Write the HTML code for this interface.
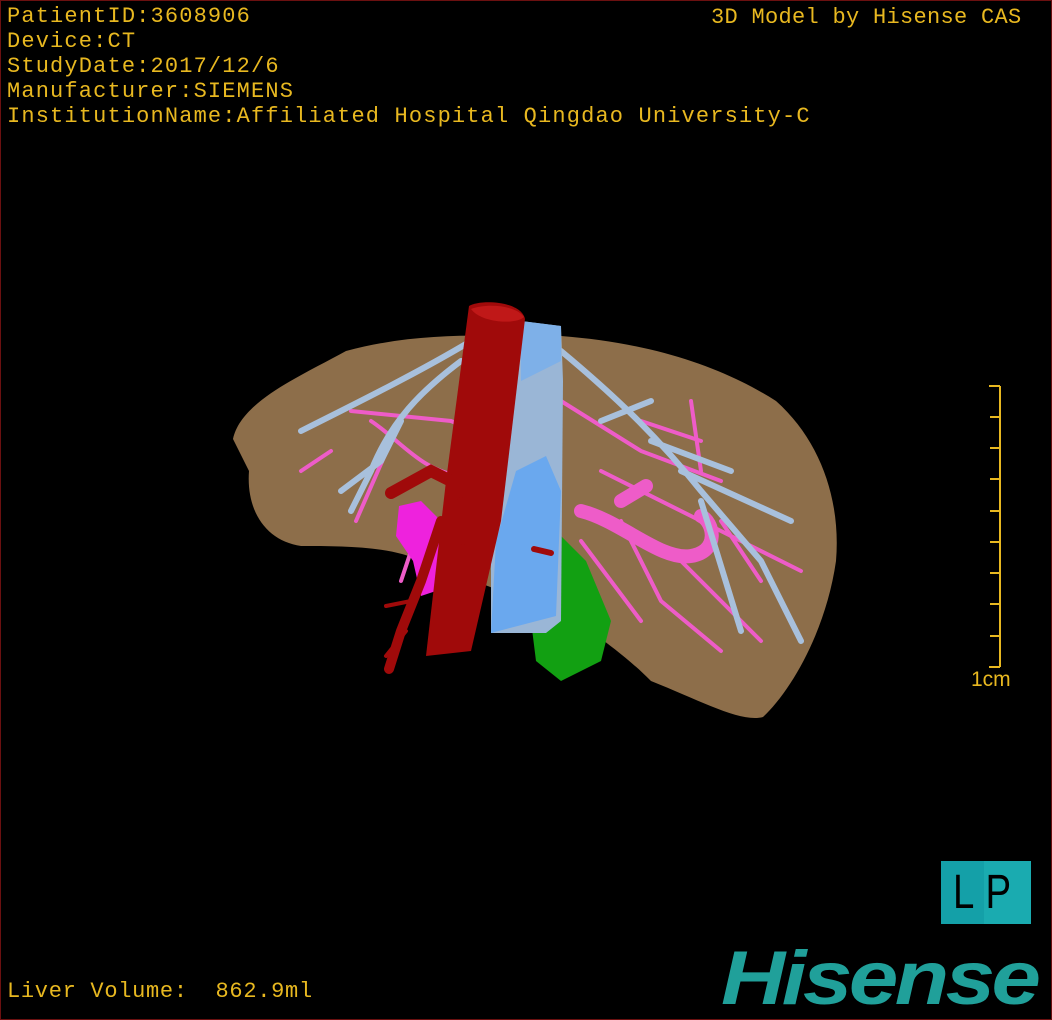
<!DOCTYPE html>
<html><head><meta charset="utf-8"><style>
html,body{margin:0;padding:0;background:#000}
#s{position:relative;width:1050px;height:1018px;border:1px solid #6b1010;background:#000;overflow:hidden}
.t{position:absolute;left:6px;color:#e8b820;font-family:"Liberation Mono",monospace;font-size:22px;line-height:25px;letter-spacing:1.15px;white-space:pre}
</style></head><body><div id="s">
<div class="t" style="top:3px">PatientID:3608906
Device:CT
StudyDate:2017/12/6
Manufacturer:SIEMENS
InstitutionName:Affiliated Hospital Qingdao University-C</div>
<div class="t" style="top:4px;left:710px;letter-spacing:0.3px">3D Model by Hisense CAS</div>
<div class="t" style="top:978px;letter-spacing:0.7px">Liver Volume:  862.9ml</div>
<div class="t" style="top:666px;left:970px;font-family:'Liberation Sans',sans-serif;font-size:21px;letter-spacing:0">1cm</div>
<svg width="1050" height="1018" style="position:absolute;left:0;top:0">
<path d="M232,438 C240,400 300,375 345,350 C420,330 480,335 560,335 C650,342 720,365 775,400 C820,440 840,500 835,560 C825,630 790,690 762,716 C740,722 700,700 650,680 C620,650 600,640 580,620 L420,560 C390,545 340,545 300,545 C265,540 245,510 248,470 Z" fill="#8d6e4a"/>
<g fill="none" stroke-linecap="round">
<g stroke="#ee5cc8" stroke-width="4">
<path d="M350,410 L450,420 L520,450"/><path d="M370,420 C400,440 420,470 460,475"/><path d="M330,450 L300,470"/><path d="M390,440 L355,520"/><path d="M560,400 L640,450 L720,480"/><path d="M600,470 L700,520 L800,570"/><path d="M620,520 L660,600 L720,650"/><path d="M580,540 L640,620"/><path d="M680,560 L760,640"/><path d="M690,400 L700,470"/><path d="M640,420 L700,440"/><path d="M420,520 L400,580"/><path d="M720,520 L760,580"/>
</g>
<path d="M580,510 C620,520 660,560 690,555 C720,550 712,520 700,515" stroke="#ee5cc8" stroke-width="14"/>
<path d="M620,500 L645,485" stroke="#ee5cc8" stroke-width="14"/>
<g stroke="#a8c0dc" stroke-width="6">
<path d="M470,340 C420,370 360,400 300,430"/><path d="M460,360 C420,390 390,420 370,470 L350,510"/><path d="M400,420 L380,460 L340,490"/>
<path d="M560,350 C620,400 660,440 700,490 L760,560 L800,640"/><path d="M650,440 L730,470"/><path d="M680,470 L790,520"/><path d="M700,500 L740,630"/><path d="M600,420 L650,400"/>
</g>
</g>
<path d="M398,505 L420,500 L440,520 L435,590 L420,595 L412,560 L395,535 Z" fill="#ee22dd"/>
<path d="M560,535 L585,560 L610,620 L600,660 L560,680 L535,660 L530,620 L545,580 Z" fill="#12a012"/>
<path d="M520,320 L560,325 L562,380 L560,620 L545,632 L490,632 L490,560 L510,380 Z" fill="#9ab6d6"/>
<path d="M520,320 L560,325 L560,360 L520,380 Z" fill="#7eb0e8"/>
<path d="M515,470 L545,455 L560,490 L555,615 L490,632 L495,540 Z" fill="#6aa8ee"/>
<path d="M468,305 C480,298 520,300 524,318 L500,520 L470,650 L425,655 L445,480 Z" fill="#a00a0a"/>
<path d="M470,308 C485,302 515,304 523,316 C515,324 480,322 470,308Z" fill="#c01818"/>
<g fill="none" stroke="#a00a0a" stroke-linecap="round">
<path d="M450,480 L430,470 L390,492" stroke-width="12"/>
<path d="M440,520 L420,580 L400,630 L388,668" stroke-width="10"/>
<path d="M410,600 L385,605" stroke-width="4"/><path d="M405,630 L385,655" stroke-width="4"/>
<path d="M460,500 L470,520 L462,540" stroke-width="8"/>
<path d="M533,548 L550,552" stroke-width="6"/>
</g>
<g stroke="#e8b820" stroke-width="2"><path d="M999,385 V666 M988,385 H999 M988,666 H999"/>
<path d="M989,416 H999 M989,447 H999 M989,478 H999 M989,510 H999 M989,541 H999 M989,572 H999 M989,603 H999 M989,635 H999"/></g>
</svg>
<div style="position:absolute;left:940px;top:860px;width:90px;height:63px;background:#14a0a8"></div>
<div style="position:absolute;left:983px;top:860px;width:47px;height:63px;background:#1aabb0"></div>
<div style="position:absolute;left:952px;top:866px;font:48px 'Liberation Sans',sans-serif;color:#000;letter-spacing:14px;line-height:52px;transform:scaleX(0.8);transform-origin:left">LP</div>
<div style="position:absolute;left:720px;top:936px;font:italic bold 76px 'Liberation Sans',sans-serif;color:#20a09a;letter-spacing:-3px;line-height:84px;transform:scaleX(1.17);transform-origin:left">Hisense</div>
</div></body></html>
